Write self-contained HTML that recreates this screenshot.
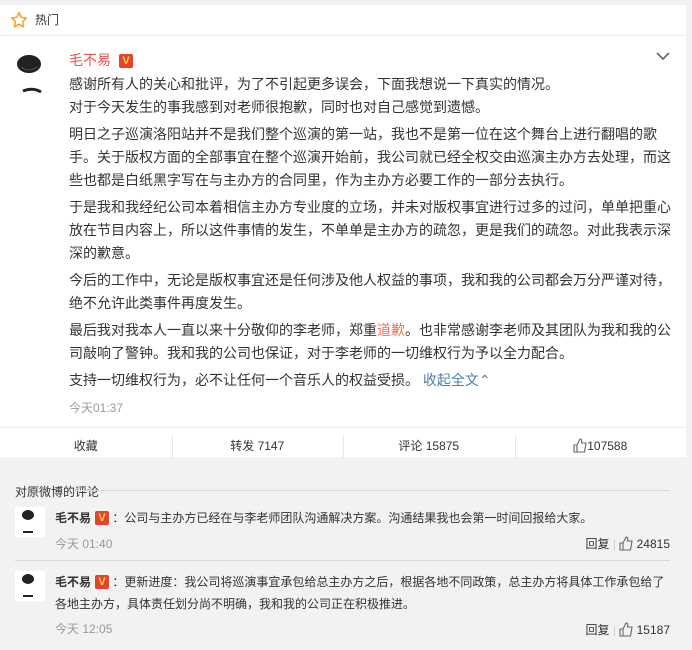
<!DOCTYPE html>
<html><head><meta charset="utf-8"><style>
*{margin:0;padding:0;box-sizing:border-box}
body{width:692px;height:650px;background:#f2f2f5;font-family:"Liberation Sans","Noto Sans CJK SC",sans-serif;color:#333;overflow:hidden;position:relative}
.card{position:absolute;left:0;top:5px;width:686px;height:452px;background:#fff}
.hd{height:31px;border-bottom:1px solid #eee;font-size:12px;line-height:30px;padding-left:35px;position:relative;color:#333}
.star{position:absolute;left:10px;top:6px}
.av{position:absolute;left:15px;top:46px;width:38px;height:48px}
.name{position:absolute;left:69px;top:45px;font-size:14px;color:#e8534f}
.v{display:inline-block;width:14px;height:14px;background:#e8412c;border-radius:2px;color:#ffd84a;font-size:11px;font-weight:bold;text-align:center;line-height:14px;vertical-align:1px;margin-left:8px}
.txt{position:absolute;left:69px;top:68px;width:612px;font-size:14px;line-height:23px;color:#333}
.txt p{margin-bottom:4px}
.txt p.a{margin-bottom:0}
.red{color:#eb7350}.blue{color:#507daf}
.time{position:absolute;left:69px;top:394px;font-size:12px;color:#999}
.chev{position:absolute;left:656px;top:46px}
.bar{position:absolute;left:0;top:422px;width:686px;height:30px;border-top:1px solid #eee;display:flex;font-size:12px;line-height:30px;padding-top:3px}
.bar div{flex:1;text-align:center;position:relative}
.bar div+div:before{content:"";position:absolute;left:0;top:5px;height:22px;border-left:1px solid #e6e6e6}
.ctitle{position:absolute;left:15px;top:483px;font-size:12px;color:#333}
.cline{position:absolute;left:76px;top:490px;width:594px;border-top:1px solid #d9d9d9}
.cm{position:absolute;left:15px;width:655px;font-size:12px;line-height:22px}
.cav{position:absolute;left:0;top:0;width:30px;height:30px;background:#fff}
.cb{margin-left:40px}
.cn{color:#333;font-weight:bold}
.ct{color:#999;font-size:12px;margin-top:4px}
.cr{position:absolute;right:0;font-size:12px;color:#333}
.sep{position:absolute;left:15px;width:655px;border-top:1px solid #d9d9d9}
.th{display:inline-block;vertical-align:-3px}
</style></head><body>
<div class="card">
<div class="hd"><svg class="star" width="18" height="18" viewBox="0 0 24 24"><path d="M12 2l3 6.5 7 .8-5.2 4.8 1.4 7L12 17.6 5.8 21.1l1.4-7L2 9.3l7-.8z" fill="none" stroke="#f5a623" stroke-width="2" stroke-linejoin="round"/></svg>热门</div>
<svg class="av" viewBox="0 0 38 48"><ellipse cx="14" cy="13" rx="12" ry="9" fill="#222"/><path d="M6 16q8 6 16 0" stroke="#555" fill="none"/><path d="M8 40q10-4 18 1" stroke="#222" stroke-width="3" fill="none"/></svg>
<div class="name">毛不易<span class="v">V</span></div>
<svg class="chev" width="14" height="10" viewBox="0 0 14 10"><path d="M1 2l6 6 6-6" stroke="#666" stroke-width="1.6" fill="none"/></svg>
<div class="txt">
<p class="a">感谢所有人的关心和批评，为了不引起更多误会，下面我想说一下真实的情况。</p>
<p>对于今天发生的事我感到对老师很抱歉，同时也对自己感觉到遗憾。</p>
<p>明日之子巡演洛阳站并不是我们整个巡演的第一站，我也不是第一位在这个舞台上进行翻唱的歌手。关于版权方面的全部事宜在整个巡演开始前，我公司就已经全权交由巡演主办方去处理，而这些也都是白纸黑字写在与主办方的合同里，作为主办方必要工作的一部分去执行。</p>
<p>于是我和我经纪公司本着相信主办方专业度的立场，并未对版权事宜进行过多的过问，单单把重心放在节目内容上，所以这件事情的发生，不单单是主办方的疏忽，更是我们的疏忽。对此我表示深深的歉意。</p>
<p>今后的工作中，无论是版权事宜还是任何涉及他人权益的事项，我和我的公司都会万分严谨对待，绝不允许此类事件再度发生。</p>
<p>最后我对我本人一直以来十分敬仰的李老师，郑重<span class="red">道歉</span>。也非常感谢李老师及其团队为我和我的公司敲响了警钟。我和我的公司也保证，对于李老师的一切维权行为予以全力配合。</p>
<p>支持一切维权行为，必不让任何一个音乐人的权益受损。 <span class="blue">收起全文⌃</span></p>
</div>
<div class="time">今天01:37</div>
<div class="bar"><div>收藏</div><div>转发 7147</div><div>评论 15875</div><div><svg class="th" width="14" height="15" viewBox="0 0 14 15"><path d="M1 7h3v7H1zM4 7l3-6c2 0 2 2 1.5 4H13l-1.5 9H4" fill="none" stroke="#666" stroke-width="1.1"/></svg>107588</div></div>
</div>
<div class="ctitle">对原微博的评论</div>
<div class="cline"></div>
<div class="cm" style="top:507px"><svg class="cav" viewBox="0 0 30 30"><rect width="30" height="30" fill="#fff"/><ellipse cx="13" cy="8" rx="6" ry="5" fill="#222"/><path d="M8 25h10" stroke="#222" stroke-width="2"/></svg>
<div class="cb"><span class="cn">毛不易</span><span class="v" style="margin-left:4px">V</span> ：公司与主办方已经在与李老师团队沟通解决方案。沟通结果我也会第一时间回报给大家。<div class="ct">今天 01:40</div></div>
<div class="cr" style="top:26px">回复 <span style="color:#ccc">|</span> <svg class="th" width="14" height="15" viewBox="0 0 14 15"><path d="M1 7h3v7H1zM4 7l3-6c2 0 2 2 1.5 4H13l-1.5 9H4" fill="none" stroke="#666" stroke-width="1.1"/></svg> 24815</div></div>
<div class="sep" style="top:560px"></div>
<div class="cm" style="top:571px"><svg class="cav" viewBox="0 0 30 30"><rect width="30" height="30" fill="#fff"/><ellipse cx="13" cy="8" rx="6" ry="5" fill="#222"/><path d="M8 25h10" stroke="#222" stroke-width="2"/></svg>
<div class="cb"><span class="cn">毛不易</span><span class="v" style="margin-left:4px">V</span> ：更新进度：我公司将巡演事宜承包给总主办方之后，根据各地不同政策，总主办方将具体工作承包给了各地主办方，具体责任划分尚不明确，我和我的公司正在积极推进。<div class="ct" style="margin-top:3px">今天 12:05</div></div>
<div class="cr" style="top:48px">回复 <span style="color:#ccc">|</span> <svg class="th" width="14" height="15" viewBox="0 0 14 15"><path d="M1 7h3v7H1zM4 7l3-6c2 0 2 2 1.5 4H13l-1.5 9H4" fill="none" stroke="#666" stroke-width="1.1"/></svg> 15187</div></div>
</body></html>
